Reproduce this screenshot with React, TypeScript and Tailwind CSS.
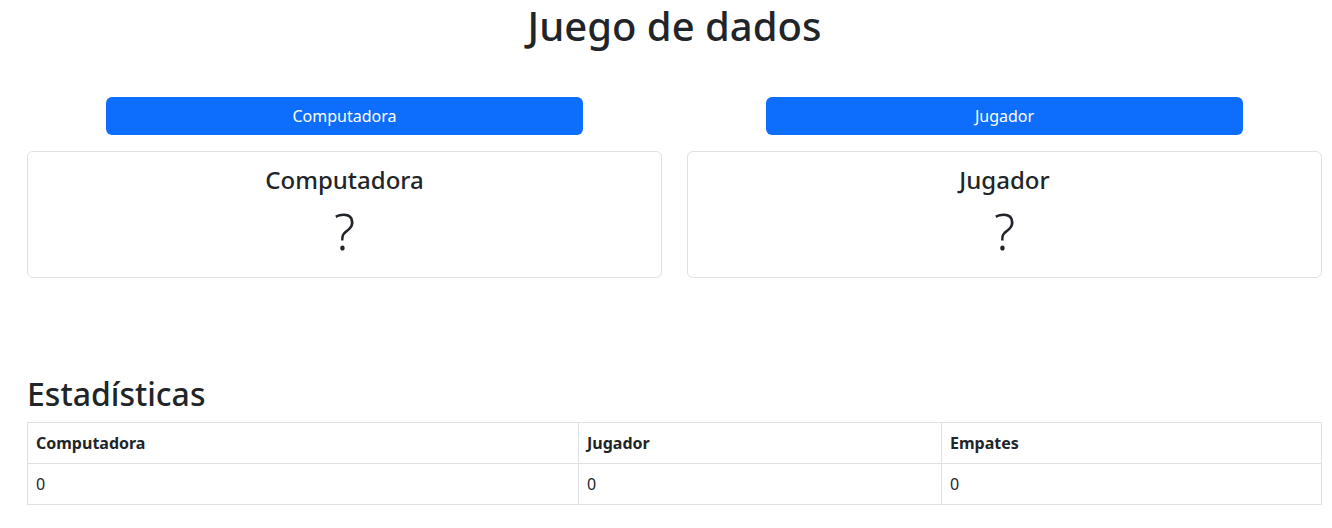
import React from 'react';

const Panel: React.FC<{ name: string }> = ({ name }) => {
  return (
    <div className="flex flex-col items-center">
      <button
        type="button"
        className="w-3/4 h-[38px] bg-[#0d6efd] text-white text-base rounded-md mt-[97px]"
      >
        {name}
      </button>
      <div className="w-full mt-[16px] h-[127px] border border-[#dee2e6] rounded-md flex flex-col items-center">
        <h4 className="text-[24px] font-medium leading-[1.2] mt-[14px] text-[#212529]">{name}</h4>
        <p className="text-[50px] font-light leading-[1.2] mt-[6px] text-[#212529]">?</p>
      </div>
    </div>
  );
};

const App: React.FC = () => {
  return (
    <div
      className="w-[1295px] ml-[27px] text-[#212529]"
      style={{ fontFamily: '"Noto Sans", "Open Sans", sans-serif' }}
    >
      <h1 className="text-[40px] font-medium leading-[1.2] text-center pt-[2px]">Juego de dados</h1>
      <div className="grid grid-cols-2 gap-[25px] -mt-[50px]">
        <Panel name="Computadora" />
        <Panel name="Jugador" />
      </div>
      <h2 className="text-[32px] font-medium leading-[1.2] mt-[97px] mb-[9px]">Estadísticas</h2>
      <table className="w-full border-collapse text-base">
        <thead>
          <tr className="h-[41px]">
            <th className="w-[551px] border border-[#dee2e6] text-left px-2 font-bold">Computadora</th>
            <th className="w-[363px] border border-[#dee2e6] text-left px-2 font-bold">Jugador</th>
            <th className="border border-[#dee2e6] text-left px-2 font-bold">Empates</th>
          </tr>
        </thead>
        <tbody>
          <tr className="h-[41px]">
            <td className="border border-[#dee2e6] px-2">0</td>
            <td className="border border-[#dee2e6] px-2">0</td>
            <td className="border border-[#dee2e6] px-2">0</td>
          </tr>
        </tbody>
      </table>
    </div>
  );
};

export default App;
